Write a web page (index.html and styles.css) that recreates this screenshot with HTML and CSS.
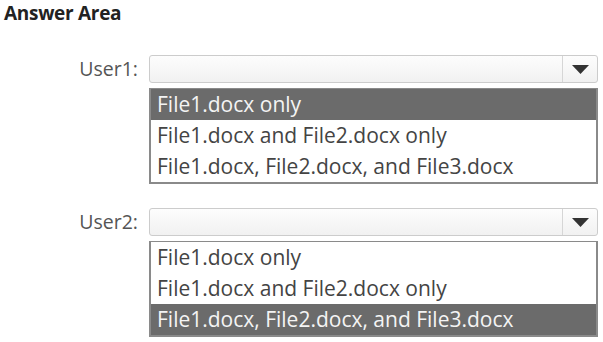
FILE: index.html
```html
<!DOCTYPE html>
<html lang="en">
<head>
    <meta charset="UTF-8">
    <title>Answer Area</title>
    <link rel="stylesheet" href="styles.css">
</head>
<body>
    <h1 class="title">Answer Area</h1>

    <div class="question">
        <div class="label">User1:</div>
        <div class="field">
            <div class="select">
                <span class="select-value"></span>
                <span class="select-arrow"><svg width="17" height="9" viewBox="0 0 17 9"><path d="M0 0 H17 L8.5 9 Z" fill="#333"/></svg></span>
            </div>
            <ul class="options">
                <li class="option selected">File1.docx only</li>
                <li class="option">File1.docx and File2.docx only</li>
                <li class="option">File1.docx, File2.docx, and File3.docx</li>
            </ul>
        </div>
    </div>

    <div class="question">
        <div class="label">User2:</div>
        <div class="field">
            <div class="select">
                <span class="select-value"></span>
                <span class="select-arrow"><svg width="17" height="9" viewBox="0 0 17 9"><path d="M0 0 H17 L8.5 9 Z" fill="#333"/></svg></span>
            </div>
            <ul class="options">
                <li class="option">File1.docx only</li>
                <li class="option">File1.docx and File2.docx only</li>
                <li class="option selected">File1.docx, File2.docx, and File3.docx</li>
            </ul>
        </div>
    </div>
</body>
</html>
```

FILE: styles.css
```css
body {
    margin: 0;
    padding: 2px 5px 0 4px;
    font-family: "Open Sans", "Noto Sans", sans-serif;
    color: #444;
    background: #fff;
}

.title {
    margin: 0 0 30px 0;
    font-size: 19px;
    font-weight: bold;
    color: #222;
    line-height: 23px;
    letter-spacing: -0.3px;
}

.question {
    display: grid;
    grid-template-columns: 134px 449px;
    column-gap: 11px;
    margin-bottom: 24px;
}

.question:last-child {
    margin-bottom: 0;
}

.label {
    text-align: right;
    font-size: 19.5px;
    line-height: 28px;
    color: #555;
}

.select {
    display: flex;
    height: 26px;
    border: 1px solid #ccc;
    border-radius: 3px;
    background: linear-gradient(#fdfdfd, #f1f1f1);
}

.select-value {
    flex: 1;
}

.select-arrow {
    width: 34px;
    border-left: 1px solid #d6d6d6;
    display: flex;
    align-items: center;
    justify-content: center;
}

.options {
    list-style: none;
    margin: 5px 0 0 0;
    padding: 0;
    border: 2px solid #8a8a8a;
    border-top-width: 1px;
}

.option {
    height: 31px;
    line-height: 31px;
    padding-left: 6px;
    font-size: 21px;
    color: #444;
}

.option.selected {
    background: #6b6b6b;
    color: #f4f4f4;
}
```
